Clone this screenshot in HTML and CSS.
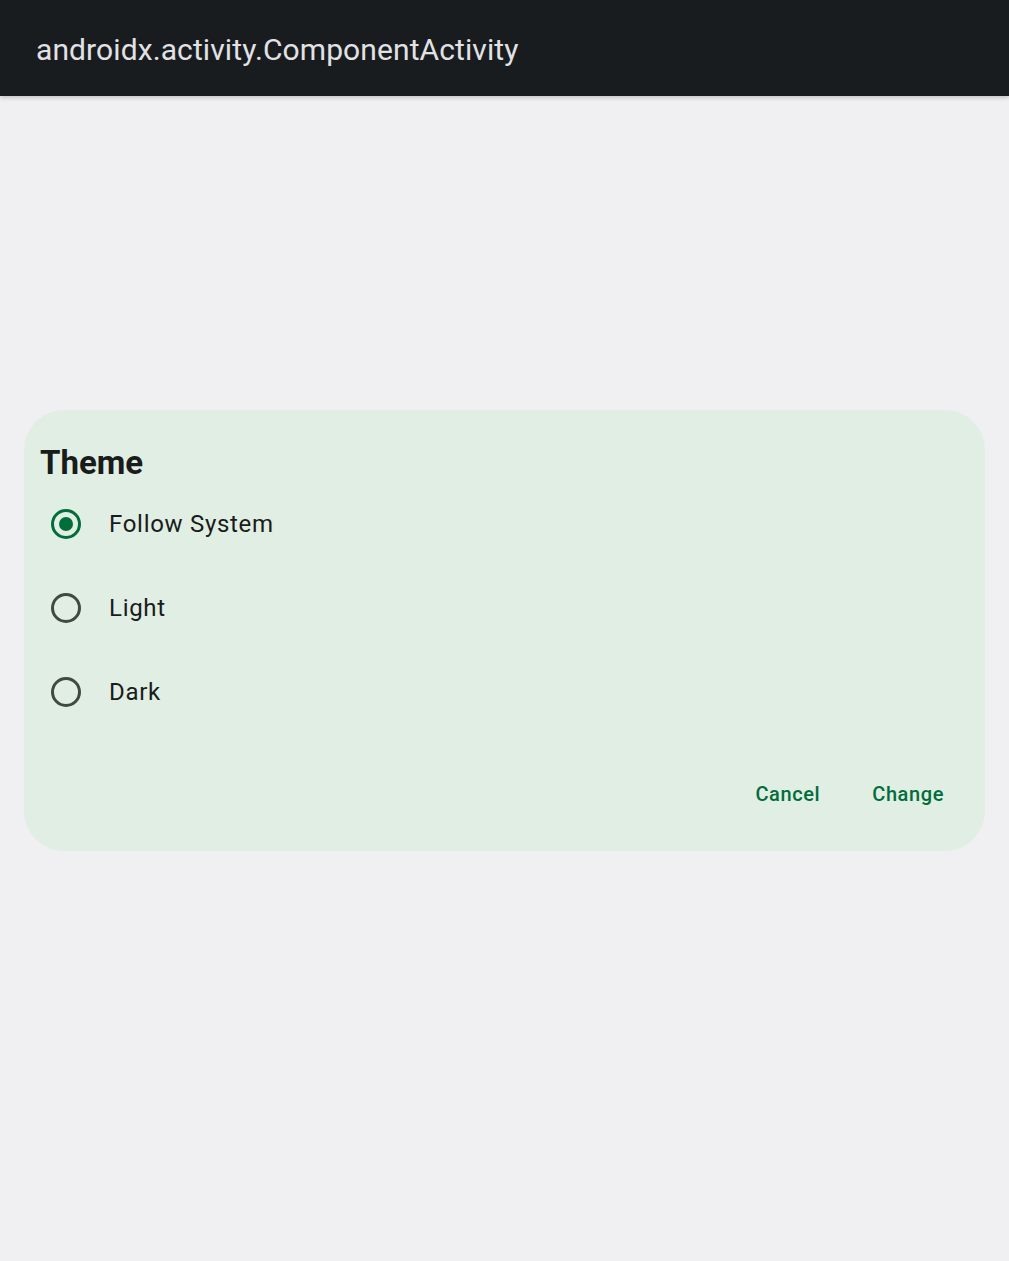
FILE: index.html
```html
<!DOCTYPE html>
<html>
<head>
<meta charset="utf-8">
<link rel="stylesheet" href="styles.css">
</head>
<body>
<header class="appbar"><span class="appbar-title">androidx.activity.ComponentActivity</span></header>
<main class="content">
  <section class="dialog">
    <h2 class="dialog-title">Theme</h2>
    <div class="options">
      <div class="option">
        <span class="radio radio-checked"><span class="radio-dot"></span></span>
        <span class="option-label">Follow System</span>
      </div>
      <div class="option">
        <span class="radio"></span>
        <span class="option-label">Light</span>
      </div>
      <div class="option">
        <span class="radio"></span>
        <span class="option-label">Dark</span>
      </div>
    </div>
    <div class="actions">
      <span class="btn">Cancel</span>
      <span class="btn">Change</span>
    </div>
  </section>
</main>
</body>
</html>
```

FILE: styles.css
```css
html, body {
  margin: 0;
  padding: 0;
  height: 100%;
}
body {
  background: #f0f0f2;
  font-family: Roboto, "Liberation Sans", sans-serif;
}
.appbar {
  height: 96px;
  background: #191c1e;
  display: flex;
  align-items: center;
  padding-left: 36px;
  box-shadow: 0 2px 4px rgba(0,0,0,0.18);
  position: relative;
}
.appbar-title {
  color: #e2e2e5;
  font-size: 30px;
  font-weight: 400;
  letter-spacing: 0.1px;
  margin-top: 2px;
}
.content {
  padding: 314px 24px 0 24px;
}
.dialog {
  background: #e0eee3;
  border-radius: 40px;
  height: 441px;
  box-sizing: border-box;
  padding: 33px 16px 0 16px;
  display: flex;
  flex-direction: column;
}
.dialog-title {
  margin: 0;
  font-size: 33px;
  font-weight: 700;
  color: #191c1a;
  line-height: 40px;
}
.options {
  display: flex;
  flex-direction: column;
  margin-top: -1px;
}
.option {
  height: 84px;
  display: flex;
  align-items: center;
}
.radio {
  width: 30px;
  height: 30px;
  box-sizing: border-box;
  border: 3px solid #414942;
  border-radius: 50%;
  margin-left: 11px;
  display: flex;
  align-items: center;
  justify-content: center;
}
.radio-checked {
  border-color: #006d3b;
}
.radio-dot {
  width: 14px;
  height: 14px;
  border-radius: 50%;
  background: #006d3b;
}
.option-label {
  margin-left: 28px;
  font-size: 24px;
  color: #191c1a;
  letter-spacing: 0.7px;
}
.actions {
  display: flex;
  justify-content: flex-end;
  gap: 52px;
  margin-top: auto;
  margin-bottom: 45px;
  padding-right: 25px;
}
.btn {
  color: #006d3b;
  font-size: 20px;
  font-weight: 500;
  letter-spacing: 0.6px;
}
```
